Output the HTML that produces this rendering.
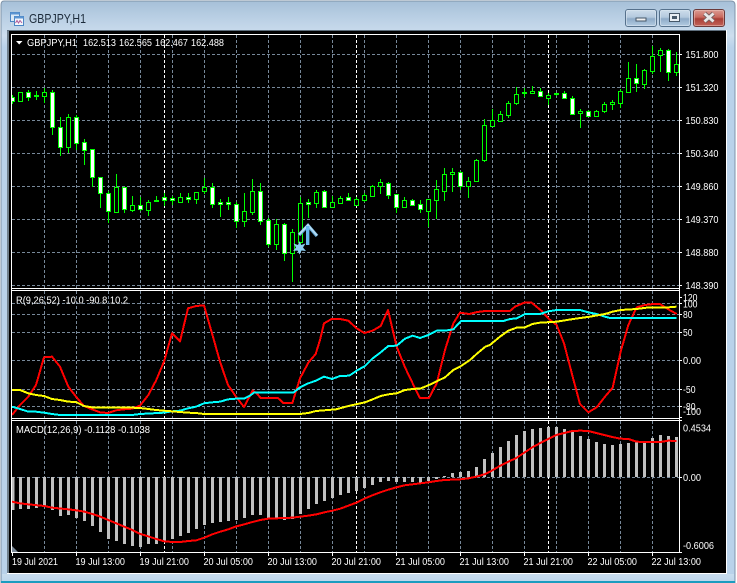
<!DOCTYPE html>
<html><head><meta charset="utf-8"><title>GBPJPY,H1</title>
<style>
html,body{margin:0;padding:0;background:#fff;width:737px;height:583px;overflow:hidden}
svg{display:block}
text{font-family:"Liberation Sans",sans-serif;font-size:10px;fill:#fff}
</style></head><body>
<svg width="737" height="583" viewBox="0 0 737 583" xmlns="http://www.w3.org/2000/svg">
<defs>
<linearGradient id="fr" x1="0" y1="0" x2="0" y2="1"><stop offset="0" stop-color="#a6c0d8"/><stop offset=".028" stop-color="#b9cfe4"/><stop offset=".06" stop-color="#cddeee"/><stop offset=".08" stop-color="#b9d2ea"/><stop offset="1" stop-color="#b9d2ea"/></linearGradient>
<linearGradient id="bt" x1="0" y1="0" x2="0" y2="1"><stop offset="0" stop-color="#cfdeec"/><stop offset=".45" stop-color="#b4c9de"/><stop offset=".55" stop-color="#8fabc8"/><stop offset="1" stop-color="#b5cde3"/></linearGradient>
<linearGradient id="cl" x1="0" y1="0" x2="0" y2="1"><stop offset="0" stop-color="#dc9f96"/><stop offset=".45" stop-color="#c9695e"/><stop offset=".55" stop-color="#a93f36"/><stop offset="1" stop-color="#c4645a"/></linearGradient>
<linearGradient id="bot" x1="0" y1="0" x2="0" y2="1"><stop offset="0" stop-color="#c9deef"/><stop offset="1" stop-color="#bed7ec"/></linearGradient>
<clipPath id="cm"><rect x="12" y="35" width="667" height="253"/></clipPath>
</defs>
<!-- window frame -->
<path d="M4 1H731Q735 1 735 5V583H1V5Q1 1 4 1Z" fill="url(#fr)" stroke="#7e93a8" stroke-width="1"/>
<rect x="2" y="574" width="732" height="7" fill="url(#bot)"/>
<rect x="1" y="581" width="734" height="2" fill="#1b9cbf"/>
<rect x="7" y="30" width="720" height="544" fill="#fff"/>
<rect x="7" y="30" width="2" height="543" fill="#6f7f8c"/>
<rect x="7" y="30" width="719" height="1" fill="#5e6e7c"/>
<rect x="9" y="31" width="717" height="542" fill="#000"/>
<!-- title -->
<g>
<rect x="10.5" y="12.5" width="9" height="9" fill="#dbe9f6" stroke="#4d86c4"/>
<rect x="10.5" y="12.5" width="9" height="2" fill="#5b95d2"/>
<rect x="14.5" y="16.5" width="9" height="9" fill="#f4f8fc" stroke="#4d86c4"/>
<rect x="14.5" y="16.5" width="9" height="2" fill="#5b95d2"/>
<path d="M15.5 23L17 20.5L18.5 23L20 20.5L22 23" fill="none" stroke="#b05a9a" stroke-width="1"/>
</g>
<text x="29" y="23" textLength="57" lengthAdjust="spacingAndGlyphs" style="font-size:12.5px;fill:#1c2b3a">GBPJPY,H1</text>
<!-- buttons -->
<rect x="625.5" y="9.5" width="31" height="17" rx="2.5" fill="url(#bt)" stroke="#56718c"/>
<rect x="626.5" y="10.5" width="29" height="15" rx="1.5" fill="none" stroke="#dbe6f0" stroke-opacity=".6"/>
<rect x="636" y="18" width="10" height="3" fill="#f0f0f0" stroke="#46586a" stroke-width="1"/>
<rect x="659.5" y="9.5" width="31" height="17" rx="2.5" fill="url(#bt)" stroke="#56718c"/>
<rect x="660.5" y="10.5" width="29" height="15" rx="1.5" fill="none" stroke="#dbe6f0" stroke-opacity=".6"/>
<rect x="669.5" y="13.5" width="10" height="8" fill="#e8eef4" stroke="#46586a"/>
<rect x="672" y="16" width="5" height="3" fill="#46586a"/>
<rect x="693.5" y="9.5" width="31" height="17" rx="2.5" fill="url(#cl)" stroke="#6b3a3a"/>
<rect x="694.5" y="10.5" width="29" height="15" rx="1.5" fill="none" stroke="#f0c8c0" stroke-opacity=".5"/>
<path d="M704.5 13.5L713.5 21.5M713.5 13.5L704.5 21.5" stroke="#7a5f5f" stroke-width="4.6" fill="none"/>
<path d="M704.5 13.5L713.5 21.5M713.5 13.5L704.5 21.5" stroke="#e8e8e8" stroke-width="2.8" fill="none"/>

<g shape-rendering="crispEdges" fill="none">
<!-- grids -->
<g stroke="#778899" stroke-dasharray="3 2">
<path d="M12 54.5H679M12 87.5H679M12 120.5H679M12 153.5H679M12 186.5H679M12 219.5H679M12 252.5H679M12 285.5H679"/>
<path d="M12 303.5H679M12 314.5H679M12 332.5H679M12 360.5H679M12 389.5H679M12 406.5H679"/>
<path d="M12 477.5H679"/>
<path id="v" d="M44.5 35V288M76.5 35V288M108.5 35V288M140.5 35V288M172.5 35V288M204.5 35V288M236.5 35V288M268.5 35V288M300.5 35V288M332.5 35V288M364.5 35V288M396.5 35V288M428.5 35V288M460.5 35V288M492.5 35V288M524.5 35V288M556.5 35V288M588.5 35V288M620.5 35V288M652.5 35V288"/>
<path d="M44.5 291V418M76.5 291V418M108.5 291V418M140.5 291V418M172.5 291V418M204.5 291V418M236.5 291V418M268.5 291V418M300.5 291V418M332.5 291V418M364.5 291V418M396.5 291V418M428.5 291V418M460.5 291V418M492.5 291V418M524.5 291V418M556.5 291V418M588.5 291V418M620.5 291V418M652.5 291V418"/>
<path d="M44.5 421V552M76.5 421V552M108.5 421V552M140.5 421V552M172.5 421V552M204.5 421V552M236.5 421V552M268.5 421V552M300.5 421V552M332.5 421V552M364.5 421V552M396.5 421V552M428.5 421V552M460.5 421V552M492.5 421V552M524.5 421V552M556.5 421V552M588.5 421V552M620.5 421V552M652.5 421V552"/>
</g>
<path stroke="#fff" stroke-dasharray="3 2" d="M164.5 35V288M356.5 35V288M548.5 35V288M164.5 291V418M356.5 291V418M548.5 291V418M164.5 421V552M356.5 421V552M548.5 421V552"/>

<!-- candles -->
<g clip-path="url(#cm)" stroke="#00ff00">
<path d="M12.5 95V104M28.5 90V101M36.5 91V100M44.5 88V103M52.5 90V135M60.5 117V156M68.5 114V153M76.5 115V150M84.5 139V165M92.5 149V187M100.5 177V208M108.5 191V223M116.5 174V212M124.5 187V213M132.5 196V212M140.5 197V211M148.5 200V216M156.5 196V202M164.5 193V206M172.5 196V205M180.5 193V202M188.5 193V203M196.5 192V204M204.5 178V194M212.5 183V208M220.5 199V217M228.5 197V210M236.5 202V228M244.5 193V227M252.5 179V215M260.5 183V225M268.5 218V247M276.5 219V250M284.5 223V261M292.5 229V282M300.5 197V245M308.5 199V218M316.5 190V208M324.5 190V208M332.5 196V207M340.5 196V203M348.5 193V201M356.5 197V205M364.5 193V202M372.5 185V196M380.5 179V194M388.5 182V199M396.5 194V213M404.5 197V207M412.5 199V206M420.5 200V213M428.5 199V227M436.5 180V219M444.5 168V201M452.5 168V192M460.5 171V190M468.5 177V198M476.5 159V181M484.5 119V162M492.5 109V127M500.5 111V122M508.5 101V118M516.5 87V105M524.5 88V97M532.5 86V93M540.5 88V97M548.5 93V105M556.5 93V96M564.5 91V99M572.5 96V114M580.5 109V128M588.5 110V117M596.5 110V117M604.5 102V113M612.5 100V110M620.5 89V108M628.5 62V93M636.5 64V92M644.5 69V89M652.5 46V74M660.5 48V72M668.5 49V81M676.5 52V76"/>
<path fill="#000" d="M18.5 92.5h4v9h-4zM42.5 92.5h4v4h-4zM66.5 117.5h4v30h-4zM114.5 187.5h4v25h-4zM130.5 205.5h4v5h-4zM146.5 202.5h4v8h-4zM178.5 197.5h4v5h-4zM194.5 192.5h4v7h-4zM202.5 187.5h4v4h-4zM242.5 211.5h4v10h-4zM250.5 191.5h4v21h-4zM274.5 224.5h4v20h-4zM290.5 232.5h4v21h-4zM298.5 203.5h4v39h-4zM314.5 192.5h4v11h-4zM330.5 202.5h4v5h-4zM338.5 198.5h4v5h-4zM354.5 199.5h4v6h-4zM362.5 195.5h4v5h-4zM370.5 186.5h4v10h-4zM378.5 182.5h4v4h-4zM402.5 200.5h4v7h-4zM426.5 199.5h4v12h-4zM434.5 189.5h4v11h-4zM442.5 174.5h4v17h-4zM466.5 181.5h4v5h-4zM474.5 160.5h4v21h-4zM482.5 125.5h4v35h-4zM490.5 120.5h4v6h-4zM498.5 114.5h4v7h-4zM506.5 103.5h4v12h-4zM514.5 94.5h4v9h-4zM530.5 91.5h4v2h-4zM546.5 95.5h4v3h-4zM594.5 111.5h4v5h-4zM602.5 104.5h4v7h-4zM618.5 91.5h4v12h-4zM626.5 78.5h4v14h-4zM642.5 70.5h4v14h-4zM650.5 56.5h4v15h-4zM658.5 50.5h4v5h-4zM674.5 64.5h4v8h-4zM450.5 172.5h4v2h-4zM610.5 102.5h4v2h-4zM578.5 111.5h4v2h-4z"/>
<path fill="#fff" d="M10.5 97.5h4v4h-4zM26.5 92.5h4v5h-4zM50.5 92.5h4v35h-4zM58.5 127.5h4v20h-4zM74.5 117.5h4v26h-4zM82.5 142.5h4v8h-4zM90.5 149.5h4v28h-4zM98.5 177.5h4v16h-4zM106.5 193.5h4v18h-4zM122.5 187.5h4v22h-4zM138.5 205.5h4v4h-4zM162.5 197.5h4v3h-4zM170.5 198.5h4v2h-4zM186.5 197.5h4v2h-4zM210.5 187.5h4v17h-4zM218.5 202.5h4v2h-4zM226.5 202.5h4v2h-4zM234.5 204.5h4v17h-4zM258.5 191.5h4v30h-4zM266.5 220.5h4v24h-4zM282.5 224.5h4v29h-4zM306.5 202.5h4v2h-4zM322.5 191.5h4v16h-4zM346.5 197.5h4v3h-4zM386.5 183.5h4v12h-4zM394.5 194.5h4v13h-4zM410.5 200.5h4v5h-4zM418.5 204.5h4v5h-4zM458.5 172.5h4v14h-4zM538.5 91.5h4v5h-4zM562.5 93.5h4v5h-4zM570.5 98.5h4v16h-4zM586.5 111.5h4v5h-4zM634.5 78.5h4v5h-4zM666.5 50.5h4v22h-4z"/>
<path stroke="none" fill="#00ff00" d="M34 95h5v2h-5zM154 200h5v2h-5zM522 92h5v2h-5zM554 93h5v2h-5z"/>
</g>

<!-- RSI lines -->
<g transform="translate(0 290) scale(.33333)" stroke-width="6" stroke-linejoin="round">
<polyline stroke="#ff0000" points="36,375 60,345 85,320 108,285 132,202 156,200 180,230 205,290 228,320 252,348 276,358 300,367 324,369 348,361 372,358 396,356 420,347 445,315 468,272 492,215 516,130 540,154 564,55 588,48 612,46 636,130 660,215 684,285 708,320 732,351 750,317"/>
<polyline transform="translate(750 0)" stroke="#ff0000" points="0,317 8,302 20,310 32,324 84,324 100,339 127,339 150,265 175,218 197,192 210,150 222,100 245,87 270,87 295,92 320,115 343,129 368,122 392,108 414,60 440,170 465,232 488,280 510,324 537,324 560,280 585,180 610,100 630,68 658,72 682,66 706,63 720,63 780,63 795,50 823,38 845,38 875,63 898,88 920,105 942,160 968,260 990,342 1015,367 1040,352 1065,320 1088,293 1112,185 1135,105 1160,52 1185,45 1210,42 1230,42 1255,58 1280,72"/>
<polyline stroke="#00ffff" points="36,350 60,357 85,365 108,365 132,368 156,372 180,375 396,375 420,372 492,368 516,364 540,362 564,355 588,350 612,340 636,337 660,335 684,328 708,326 732,326 750,317"/>
<polyline transform="translate(750 0)" stroke="#00ffff" points="0,317 12,308 130,308 150,292 175,280 198,272 222,260 246,267 270,258 298,257 320,242 345,228 368,205 392,187 415,168 440,167 465,146 488,137 510,144 535,135 560,122 585,122 610,118 633,93 760,93 780,87 800,85 825,72 870,72 895,64 920,60 990,60 1015,67 1040,72 1065,80 1080,84 1280,84"/>
<polyline stroke="#ffff00" points="36,300 60,300 85,310 108,315 132,318 156,327 180,330 205,335 228,336 252,348 276,352 300,353 396,353 420,354 445,357 468,360 492,362 516,364 540,366 564,368 588,369 612,372 750,372"/>
<polyline transform="translate(750 0)" stroke="#ffff00" points="0,372 150,372 175,369 198,363 258,358 295,348 345,337 368,328 392,318 415,313 440,310 465,300 488,297 513,295 537,285 585,262 610,240 633,228 660,210 682,190 706,170 720,165 750,140 775,122 800,113 823,113 847,102 870,98 920,95 970,87 1020,80 1065,72 1088,65 1112,60 1160,57 1190,53 1255,52 1280,50"/>
</g>

<!-- MACD bars -->
<path stroke="#c0c0c0" stroke-width="3" d="M13 477V510M20.5 477V509M28.5 477V509M36.5 477V508M44.5 477V507M52.5 477V510M60.5 477V516M68.5 477V515M76.5 477V518M84.5 477V521M92.5 477V526M100.5 477V532M108.5 477V539M116.5 477V541M124.5 477V544M132.5 477V546M140.5 477V547M148.5 477V544M156.5 477V544M164.5 477V541M172.5 477V539M180.5 477V536M188.5 477V533M196.5 477V529M204.5 477V525M212.5 477V523M220.5 477V522M228.5 477V521M236.5 477V520M244.5 477V518M252.5 477V515M260.5 477V515M268.5 477V518M276.5 477V519M284.5 477V520M292.5 477V519M300.5 477V514M308.5 477V509M316.5 477V504M324.5 477V501M332.5 477V498M340.5 477V495M348.5 477V493M356.5 477V491M364.5 477V488M372.5 477V485M380.5 477V482M388.5 477V481M396.5 477V482M404.5 477V482M412.5 477V482M420.5 477V483M428.5 477V481M436.5 477V479M444.5 477V476M452.5 477V473M460.5 477V472M468.5 477V471M476.5 477V467M484.5 477V459M492.5 477V453M500.5 477V447M508.5 477V441M516.5 477V435M524.5 477V431M532.5 477V429M540.5 477V428M548.5 477V427M556.5 477V427M564.5 477V429M572.5 477V432M580.5 477V436M588.5 477V439M596.5 477V442M604.5 477V444M612.5 477V445M620.5 477V444M628.5 477V443M636.5 477V442M644.5 477V442M652.5 477V438M660.5 477V435M668.5 477V436M676.5 477V437"/>
<!-- MACD signal -->
<g transform="translate(0 415) scale(.33333)" stroke-width="6" stroke="#ff0000" stroke-linejoin="round">
<polyline points="36,260 60,265 85,268 133,273 156,278 205,283 229,286 253,290 277,297 301,305 325,315 349,325 373,335 397,345 421,357 445,364 469,372 493,379 517,381 541,381 565,378 589,376 613,368 637,358 661,350 685,343 709,334 733,328 750,323 781,315 805,311 853,309 877,308 901,305 925,302 949,298 973,292 997,287 1021,281 1045,272 1069,263 1093,251 1117,241 1141,232 1165,224 1189,217 1213,211 1261,205 1285,202 1309,198 1333,195 1381,193 1405,190 1429,185 1453,178 1470,170"/>
<polyline transform="translate(1470 0)" points="0,170 31,152 55,140 79,129 103,113 127,97 151,84 175,72 199,60 223,54 247,48 271,47 295,48 319,54 343,60 367,66 391,71 415,72 439,80 463,81 511,81 535,77 559,78"/>
</g>

<!-- panel borders -->
<g stroke="#fff">
<path d="M11.5 34.5H679.5V552.5H11.5Z"/>
<path d="M11 288.5H680M11 290.5H680M11 418.5H680M11 420.5H680"/>
<path d="M679 54.5H682M679 87.5H682M679 120.5H682M679 153.5H682M679 186.5H682M679 219.5H682M679 252.5H682M679 285.5H682"/>
<path d="M679 297.5H682M679 303.5H682M679 314.5H682M679 332.5H682M679 360.5H682M679 389.5H682M679 406.5H682M679 417.5H682"/>
<path d="M679 420.5H682M679 477.5H682M679 552.5H682"/>
<path d="M12.5 552V556M76.5 552V556M140.5 552V556M204.5 552V556M268.5 552V556M332.5 552V556M396.5 552V556M460.5 552V556M524.5 552V556M588.5 552V556M652.5 552V556"/>
</g>
</g>
<path d="M12 546L18 552H12Z" fill="#7a8896"/>

<!-- arrow & star -->
<path d="M299 235L308 225.5L317 236" fill="none" stroke="#5fa3cf" stroke-width="3.4"/>
<path d="M299 234.5L308 225L317 235.5" fill="none" stroke="#b2dcf5" stroke-width="2"/>
<rect x="306" y="226" width="3.4" height="19" fill="#66b8ee"/>
<polygon points="299.5,241 301,245 305.5,243.5 303,247.5 306,251 301.5,250.5 299.5,254.5 297.5,250.5 293,251 296,247.5 293.5,243.5 298,245" fill="#8accf0"/>

<!-- chart labels -->
<path d="M16 41H22.5L19.2 44.5Z" fill="#fff"/>
<text x="27" y="46" textLength="50" lengthAdjust="spacingAndGlyphs">GBPJPY,H1</text>
<text x="83" y="46" textLength="33" lengthAdjust="spacingAndGlyphs">162.513</text>
<text x="119" y="46" textLength="33" lengthAdjust="spacingAndGlyphs">162.565</text>
<text x="155" y="46" textLength="33" lengthAdjust="spacingAndGlyphs">162.467</text>
<text x="191" y="46" textLength="33" lengthAdjust="spacingAndGlyphs">162.488</text>
<text x="16" y="303.5" textLength="112" lengthAdjust="spacingAndGlyphs">R(9,26,52) -10.0 -90.8 10.2</text>
<text x="16" y="433" textLength="134" lengthAdjust="spacingAndGlyphs">MACD(12,26,9) -0.1128 -0.1038</text>

<!-- price axis -->
<text x="685.5" y="58" textLength="33" lengthAdjust="spacingAndGlyphs">151.800</text>
<text x="685.5" y="91" textLength="33" lengthAdjust="spacingAndGlyphs">151.320</text>
<text x="685.5" y="124" textLength="33" lengthAdjust="spacingAndGlyphs">150.830</text>
<text x="685.5" y="157" textLength="33" lengthAdjust="spacingAndGlyphs">150.340</text>
<text x="685.5" y="190" textLength="33" lengthAdjust="spacingAndGlyphs">149.860</text>
<text x="685.5" y="223" textLength="33" lengthAdjust="spacingAndGlyphs">149.370</text>
<text x="685.5" y="256" textLength="33" lengthAdjust="spacingAndGlyphs">148.880</text>
<text x="685.5" y="289" textLength="33" lengthAdjust="spacingAndGlyphs">148.390</text>
<text x="683" y="301" textLength="14.5" lengthAdjust="spacingAndGlyphs">120</text>
<text x="683" y="307.5" textLength="14.5" lengthAdjust="spacingAndGlyphs">100</text>
<text x="683" y="318" textLength="9.5" lengthAdjust="spacingAndGlyphs">80</text>
<text x="683" y="336" textLength="9.5" lengthAdjust="spacingAndGlyphs">50</text>
<text x="683" y="364" textLength="18" lengthAdjust="spacingAndGlyphs">0.00</text>
<text x="683" y="393" textLength="12.5" lengthAdjust="spacingAndGlyphs">-50</text>
<text x="683" y="410" textLength="12.5" lengthAdjust="spacingAndGlyphs">-80</text>
<text x="683" y="415" textLength="18" lengthAdjust="spacingAndGlyphs">-100</text>
<text x="683" y="431.5" textLength="28" lengthAdjust="spacingAndGlyphs">0.4534</text>
<text x="683" y="481" textLength="18" lengthAdjust="spacingAndGlyphs">0.00</text>
<text x="683" y="549" textLength="31" lengthAdjust="spacingAndGlyphs">-0.6006</text>

<!-- time axis -->
<text x="12" y="565" textLength="46" lengthAdjust="spacingAndGlyphs">19 Jul 2021</text>
<text x="75.5" y="565" textLength="49.5" lengthAdjust="spacingAndGlyphs">19 Jul 13:00</text>
<text x="139.5" y="565" textLength="49.5" lengthAdjust="spacingAndGlyphs">19 Jul 21:00</text>
<text x="203.5" y="565" textLength="49.5" lengthAdjust="spacingAndGlyphs">20 Jul 05:00</text>
<text x="267.5" y="565" textLength="49.5" lengthAdjust="spacingAndGlyphs">20 Jul 13:00</text>
<text x="331.5" y="565" textLength="49.5" lengthAdjust="spacingAndGlyphs">20 Jul 21:00</text>
<text x="395.5" y="565" textLength="49.5" lengthAdjust="spacingAndGlyphs">21 Jul 05:00</text>
<text x="459.5" y="565" textLength="49.5" lengthAdjust="spacingAndGlyphs">21 Jul 13:00</text>
<text x="523.5" y="565" textLength="49.5" lengthAdjust="spacingAndGlyphs">21 Jul 21:00</text>
<text x="587.5" y="565" textLength="49.5" lengthAdjust="spacingAndGlyphs">22 Jul 05:00</text>
<text x="651.5" y="565" textLength="49.5" lengthAdjust="spacingAndGlyphs">22 Jul 13:00</text>
</svg>
</body></html>
